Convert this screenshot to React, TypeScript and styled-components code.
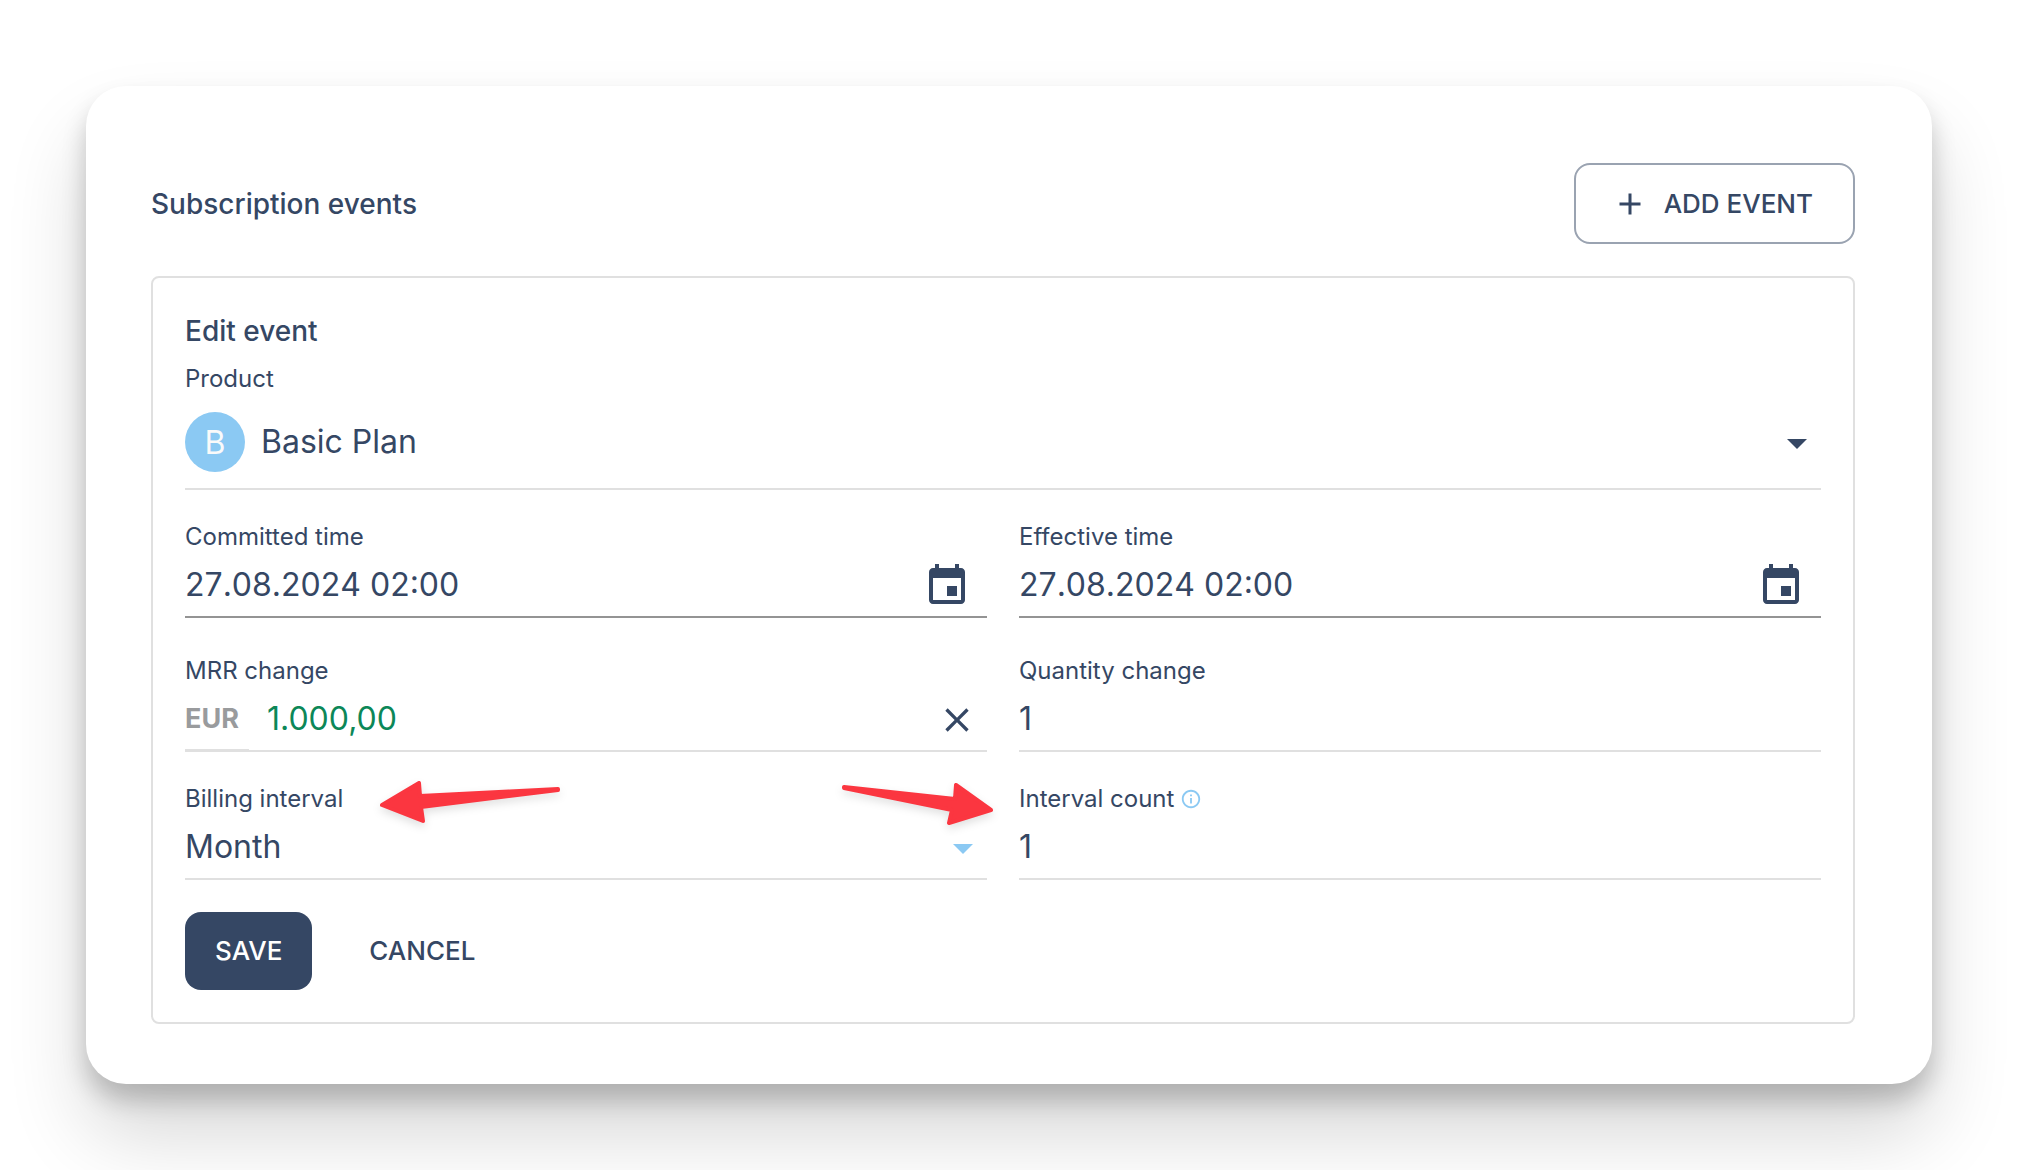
import React from "react";
import styled, { createGlobalStyle, css } from "styled-components";

const ink = "#354764";
const sky = "#8bc9f3";
const line = "#e0e0e0";

const GlobalStyle = createGlobalStyle`
  *, *::before, *::after { box-sizing: border-box; }
  body {
    margin: 0;
    background: #fff;
    color: ${ink};
    font-family: Inter, "Liberation Sans", sans-serif;
    font-optical-sizing: none;
    font-size: 32px;
  }
  button, input, select { font: inherit; color: inherit; }
`;

const Page = styled.main`
  padding: 86px;
  min-height: 100vh;
  overflow: hidden;
`;

const Card = styled.section`
  padding: 77px 77px 60px 65px;
  border-radius: 40px;
  background: #fff;
  box-shadow: 0 50px 80px rgba(0, 0, 0, 0.16), 0 16px 24px rgba(0, 0, 0, 0.2);
`;

const Header = styled.header`
  display: flex;
  align-items: center;
  justify-content: space-between;
  margin-bottom: 32px;
`;

const Title = styled.h2`
  margin: 0;
  font-size: 28px;
  line-height: 42px;
  font-weight: 500;
`;

const Subtitle = styled.h3`
  margin: 0 0 8px;
  font-size: 28px;
  line-height: 42px;
  font-weight: 500;
`;

const Button = styled.button<{ $kind: "outlined" | "filled" | "text" }>`
  display: inline-flex;
  align-items: center;
  gap: 16px;
  height: 78px;
  padding: 0 30px 2px;
  border: 0;
  border-radius: 16px;
  background: transparent;
  font-size: 26px;
  font-weight: 500;
  cursor: pointer;
  ${(p) =>
    p.$kind === "outlined" &&
    css`
      height: 81px;
      padding: 0 40px 0 36px;
      border: 2px solid #9aa3b1;
    `}
  ${(p) =>
    p.$kind === "filled" &&
    css`
      background: ${ink};
      color: #fff;
    `}
`;

const Panel = styled.form`
  padding: 32px;
  border: 2px solid ${line};
  border-radius: 8px;
`;

const Row = styled.div<{ $after?: number }>`
  display: grid;
  grid-template-columns: 1fr 1fr;
  gap: 32px;
  margin-bottom: ${(p) => p.$after ?? 28}px;
`;

const Field = styled.div`
  position: relative;
  min-width: 0;
`;

const ProductField = styled(Field)`
  margin-bottom: 28px;
`;

const LabelRow = styled.div`
  display: flex;
  align-items: center;
  gap: 6px;
  height: 38px;
`;

const Label = styled.label`
  font-size: 24px;
  line-height: 38px;
`;

const Control = styled.div<{ $strong?: boolean; $end?: number; $tall?: boolean }>`
  display: flex;
  align-items: center;
  height: ${(p) => (p.$tall ? 92 : 62)}px;
  padding-right: ${(p) => p.$end ?? 0}px;
  border-bottom: 2px solid ${(p) => (p.$strong ? "#949494" : line)};
`;

const valueStyle = css`
  flex: 1;
  min-width: 0;
  height: 48px;
  margin: 0;
  padding: 0 0 4px;
  border: 0;
  outline: 0;
  background: transparent;
`;

const Input = styled.input<{ $positive?: boolean }>`
  ${valueStyle}
  ${(p) => p.$positive && "color: #0c8758;"}
`;

const DateInput = styled(Input)`
  font-kerning: none;
`;

const Select = styled.select`
  ${valueStyle}
  appearance: none;
`;

const Avatar = styled.span`
  display: grid;
  place-items: center;
  width: 60px;
  height: 60px;
  margin: 0 16px 2px 0;
  border-radius: 50%;
  background: ${sky};
  color: #fafafa;
`;

const Currency = styled.span`
  display: flex;
  align-items: center;
  align-self: stretch;
  width: 64px;
  margin-right: 18px;
  padding-bottom: 2px;
  border-bottom: 1px solid ${line};
  color: #999b9d;
  font-size: 27px;
  font-weight: 700;
`;

const IconButton = styled.button`
  display: flex;
  padding: 0;
  border: 0;
  background: transparent;
  cursor: pointer;
`;

const Icon = styled.svg<{ $size: number; $color?: string }>`
  flex: none;
  width: ${(p) => p.$size}px;
  height: ${(p) => p.$size}px;
  fill: ${(p) => p.$color ?? ink};
`;

const Pointer = styled.svg<{ $side: "left" | "right" }>`
  position: absolute;
  top: -8px;
  width: 200px;
  height: 64px;
  pointer-events: none;
  overflow: visible;
  filter: drop-shadow(0 4px 4px rgba(0, 0, 0, 0.12));
  fill: #fb3640;
  stroke: #fb3640;
  stroke-width: 4px;
  stroke-linejoin: round;
  ${(p) => (p.$side === "left" ? "left: 187px;" : "right: -13px;")}
`;

const Actions = styled.div`
  display: flex;
  gap: 27px;
  margin-top: 32px;
`;

const icons = {
  add: "M19 13h-6v6h-2v-6H5v-2h6V5h2v6h6v2z",
  drop: "M7 10l5 5 5-5z",
  event:
    "M17 12h-5v5h5v-5zM16 1v2H8V1H6v2H5c-1.11 0-1.99.9-1.99 2L3 19c0 1.1.89 2 2 2h14c1.1 0 2-.9 2-2V5c0-1.1-.9-2-2-2h-1V1h-2zm3 18H5V8h14v11z",
  close:
    "M19 6.41L17.59 5 12 10.59 6.41 5 5 6.41 10.59 12 5 17.59 6.41 19 12 13.41 17.59 19 19 17.59 13.41 12z",
  info: "M11 7h2v2h-2zm0 4h2v6h-2zm1-9C6.48 2 2 6.48 2 12s4.48 10 10 10 10-4.48 10-10S17.52 2 12 2zm0 18c-4.41 0-8-3.59-8-8s3.59-8 8-8 8 3.59 8 8-3.59 8-8 8z",
};

function Glyph({ name, size, color }: { name: keyof typeof icons; size: number; color?: string }) {
  return (
    <Icon viewBox="0 0 24 24" $size={size} $color={color} aria-hidden="true">
      <path d={icons[name]} />
    </Icon>
  );
}

function DateField({ id, label }: { id: string; label: string }) {
  return (
    <Field>
      <LabelRow>
        <Label htmlFor={id}>{label}</Label>
      </LabelRow>
      <Control $strong $end={16}>
        <DateInput id={id} defaultValue="27.08.2024 02:00" />
        <IconButton type="button" aria-label="Choose date">
          <Glyph name="event" size={48} />
        </IconButton>
      </Control>
    </Field>
  );
}

export default function App() {
  return (
    <>
      <GlobalStyle />
      <Page>
        <Card>
          <Header>
            <Title>Subscription events</Title>
            <Button $kind="outlined" type="button">
              <Glyph name="add" size={36} />
              ADD EVENT
            </Button>
          </Header>
          <Panel onSubmit={(e) => e.preventDefault()}>
            <Subtitle>Edit event</Subtitle>
            <ProductField>
              <LabelRow>
                <Label htmlFor="product">Product</Label>
              </LabelRow>
              <Control $tall>
                <Avatar aria-hidden="true">B</Avatar>
                <Select id="product">
                  <option>Basic Plan</option>
                </Select>
                <Glyph name="drop" size={48} />
              </Control>
            </ProductField>
            <Row $after={34}>
              <DateField id="committed" label="Committed time" />
              <DateField id="effective" label="Effective time" />
            </Row>
            <Row>
              <Field>
                <LabelRow>
                  <Label htmlFor="mrr">MRR change</Label>
                </LabelRow>
                <Control $end={10}>
                  <Currency>EUR</Currency>
                  <Input id="mrr" defaultValue="1.000,00" $positive />
                  <IconButton type="button" aria-label="Clear">
                    <Glyph name="close" size={40} />
                  </IconButton>
                </Control>
              </Field>
              <Field>
                <LabelRow>
                  <Label htmlFor="quantity">Quantity change</Label>
                </LabelRow>
                <Control>
                  <Input id="quantity" defaultValue="1" />
                </Control>
              </Field>
            </Row>
            <Row $after={0}>
              <Field>
                <LabelRow>
                  <Label htmlFor="interval">Billing interval</Label>
                </LabelRow>
                <Control>
                  <Select id="interval">
                    <option>Month</option>
                  </Select>
                  <Glyph name="drop" size={48} color={sky} />
                </Control>
                <Pointer $side="left" viewBox="0 0 200 64" aria-hidden="true">
                  <path d="M10 33 L47 11 L48 24 L186 17 L186 18 L49 35 L51 49 Z" />
                </Pointer>
                <Pointer $side="right" viewBox="0 0 200 64" aria-hidden="true">
                  <path d="M44 15 L44 16 L152 38 L149 51 L191 38 L156 13 L155 27 Z" />
                </Pointer>
              </Field>
              <Field>
                <LabelRow>
                  <Label htmlFor="count">Interval count</Label>
                  <Glyph name="info" size={22} color={sky} />
                </LabelRow>
                <Control>
                  <Input id="count" defaultValue="1" />
                </Control>
              </Field>
            </Row>
            <Actions>
              <Button $kind="filled" type="submit">
                SAVE
              </Button>
              <Button $kind="text" type="button">
                CANCEL
              </Button>
            </Actions>
          </Panel>
        </Card>
      </Page>
    </>
  );
}
